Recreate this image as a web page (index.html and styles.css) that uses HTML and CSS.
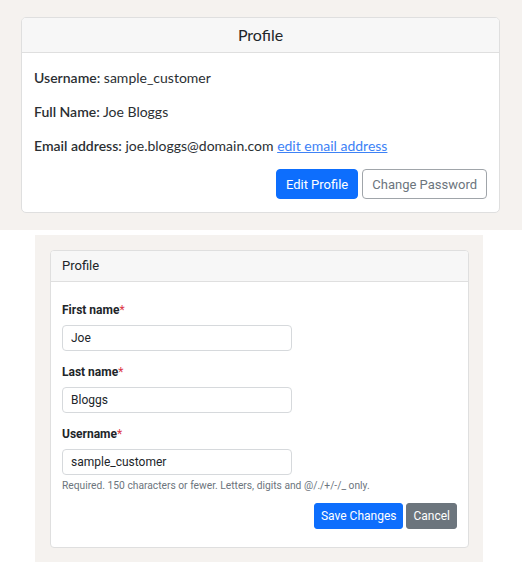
FILE: index.html
```html
<!DOCTYPE html>
<html>
<head>
<meta charset="utf-8">
<link rel="stylesheet" href="styles.css">
</head>
<body>
<section class="view">
  <div class="card">
    <div class="card-header center">Profile</div>
    <div class="card-body">
      <p class="row"><b>Username:</b> sample_customer</p>
      <p class="row"><b>Full Name:</b> Joe Bloggs</p>
      <p class="row"><b>Email address:</b> joe.bloggs@domain.com <a href="#" class="link">edit email address</a></p>
      <div class="actions">
        <button class="btn btn-primary">Edit Profile</button>
        <button class="btn btn-outline">Change Password</button>
      </div>
    </div>
  </div>
</section>
<section class="edit">
  <div class="card card-sm">
    <div class="card-header left">Profile</div>
    <form class="form-body">
      <div class="group">
        <label class="label">First name<span class="req">*</span></label>
        <input class="input" value="Joe">
      </div>
      <div class="group">
        <label class="label">Last name<span class="req">*</span></label>
        <input class="input" value="Bloggs">
      </div>
      <div class="group last">
        <label class="label">Username<span class="req">*</span></label>
        <input class="input" value="sample_customer">
        <div class="help">Required. 150 characters or fewer. Letters, digits and @/./+/-/_ only.</div>
      </div>
      <div class="actions sm">
        <button type="button" class="btn btn-primary btn-sm">Save Changes</button>
        <button type="button" class="btn btn-secondary btn-sm">Cancel</button>
      </div>
    </form>
  </div>
</section>
</body>
</html>
```
FILE: styles.css
```css
* { box-sizing: border-box; }
html, body { margin: 0; padding: 0; background: #fff; }
body { font-family: "Lato", "Liberation Sans", sans-serif; color: #212529; }

.view {
  background: #f5f2ef;
  height: 230px;
  padding: 17px 22px 0 21px;
}
.card {
  background: #fff;
  border: 1px solid #dfdfdf;
  border-radius: 5px;
  overflow: hidden;
}
.card-header {
  background: #f7f7f7;
  border-bottom: 1px solid #dfdfdf;
  height: 35px;
  line-height: 34px;
  font-size: 16px;
  color: #212529;
}
.center { text-align: center; }
.card-body { padding: 14px 12px 13px 12px; }
.row {
  margin: 0 0 12px 0;
  font-size: 14px;
  line-height: 22px;
  color: #2b2f33;
}
.row b { font-weight: 600; }
.link { color: #3d82f6; text-decoration: underline; }
.actions { display: flex; justify-content: flex-end; gap: 4px; }
.btn {
  font-family: "Roboto", "Liberation Sans", sans-serif;
  font-size: 13px;
  height: 30px;
  padding: 0 9px;
  border-radius: 4px;
  border: 1px solid transparent;
  cursor: pointer;
}
.btn-primary { background: #0d6efd; color: #fff; border-color: #0d6efd; }
.btn-outline { background: #fff; color: #6c757d; border-color: #a0a5aa; }
.btn-secondary { background: #6c757d; color: #fff; border-color: #6c757d; }

.edit {
  margin-top: 5px;
  margin-left: 35px;
  width: 448px;
  height: 327px;
  background: #f5f2ef;
  padding: 15px 14px 0 15px;
  font-family: "Roboto", "Liberation Sans", sans-serif;
}
.card-sm { height: 298px; border-radius: 4px; }
.card-header.left {
  height: 31px;
  line-height: 30px;
  font-size: 13px;
  padding-left: 11px;
  font-family: "Roboto", "Liberation Sans", sans-serif;
}
.form-body { padding: 19px 11px 18px 11px; }
.group { margin-bottom: 12px; }
.group.last { margin-bottom: 0; }
.label {
  display: block;
  font-size: 12px;
  font-weight: 700;
  line-height: 18px;
  margin-bottom: 6px;
  color: #212529;
}
.req { color: #dc3545; font-weight: 400; }
.input {
  display: block;
  width: 230px;
  height: 26px;
  border: 1px solid #d6d9dc;
  border-radius: 4px;
  padding: 0 8px;
  font-family: "Roboto", "Liberation Sans", sans-serif;
  font-size: 12px;
  color: #212529;
  background: #fff;
}
.help {
  margin-top: 3px;
  font-size: 10.25px;
  line-height: 16px;
  color: #6c757d;
}
.actions.sm { gap: 3px; margin-top: 9px; }
.btn-sm { height: 26px; font-size: 12px; padding: 0 6px; border-radius: 3px; }
```
